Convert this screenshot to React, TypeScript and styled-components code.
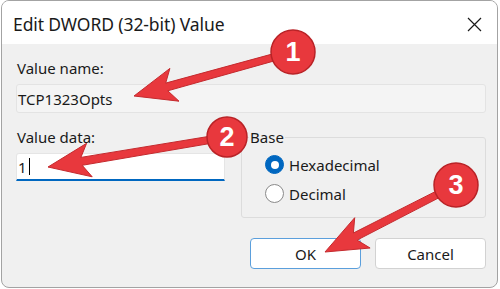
import React from 'react';
import styled, { createGlobalStyle } from 'styled-components';

const GlobalStyle = createGlobalStyle`
  html, body {
    margin: 0;
    padding: 0;
    background: #ffffff;
  }
  * {
    box-sizing: border-box;
  }
`

const Window = styled.div`
  position: relative;
  margin-left: 1px;
  width: 497px;
  height: 288px;
  border: 1px solid #a3a3a3;
  border-radius: 8px;
  background: #f0f0f0;
  overflow: hidden;
  font-family: "Noto Sans", "Open Sans", sans-serif;
  color: #1a1a1a;
`

const TitleBar = styled.div`
  height: 43px;
  background: #ffffff;
  display: flex;
  align-items: center;
  justify-content: space-between;
  padding: 0 14px 0 11px;
`

const Title = styled.span`
  font-size: 17.5px;
  letter-spacing: -0.1px;
  padding-top: 2px;
`

const Close = styled.span`
  width: 18px;
  height: 18px;
  margin-top: 3px;
  display: flex;
  align-items: center;
  justify-content: center;
`

const Body = styled.div`
  padding: 14px 11px 0 14px;
`

const Label = styled.div`
  font-size: 15px;
  line-height: 20px;
  padding-left: 1px;
`

const ReadField = styled.div`
  margin-top: 6px;
  height: 29px;
  background: #f4f4f4;
  border: 1px solid #e3e3e3;
  border-radius: 3px;
  font-size: 15px;
  display: flex;
  align-items: center;
  padding-left: 1px;
`

const Row = styled.div`
  margin-top: 9px;
  display: flex;
  align-items: flex-start;
`

const DataColumn = styled.div`
  width: 210px;
  padding-top: 5px;
`

const EditField = styled.div`
  margin-top: 6px;
  height: 28px;
  background: #ffffff;
  border: 1px solid #e5e5e5;
  border-bottom: 2px solid #0067c0;
  border-radius: 3px 3px 0 0;
  font-size: 15px;
  display: flex;
  align-items: center;
  padding-left: 1px;
`

const Caret = styled.span`
  display: inline-block;
  width: 1px;
  height: 17px;
  background: #000;
  margin-left: 2px;
`

const Group = styled.fieldset`
  margin: 6px 0 0 16px;
  width: 246px;
  height: 90px;
  border: 1px solid #dcdcdc;
  border-radius: 3px;
  padding: 4px 0 0 23px;
`

const Legend = styled.legend`
  font-size: 15px;
  line-height: 18px;
  padding: 0 1px;
  margin-left: -16px;
`

const RadioRow = styled.label`
  display: flex;
  align-items: center;
  gap: 5px;
  height: 29px;
  font-size: 15px;
`

const RadioDot = styled.span<{ $checked?: boolean }>`
  width: 19px;
  height: 19px;
  border-radius: 50%;
  background: ${p => (p.$checked ? '#0067c0' : '#ffffff')};
  border: 1px solid ${p => (p.$checked ? '#0067c0' : '#8a8a8a')};
  display: flex;
  align-items: center;
  justify-content: center;
  &::after {
    content: '';
    display: ${p => (p.$checked ? 'block' : 'none')};
    width: 8px;
    height: 8px;
    border-radius: 50%;
    background: #ffffff;
  }
`

const Buttons = styled.div`
  margin-top: 20px;
  display: flex;
  justify-content: flex-end;
  gap: 14px;
`

const Button = styled.button<{ $primary?: boolean }>`
  width: 111px;
  height: 31px;
  background: #ffffff;
  border: 1px solid ${p => (p.$primary ? '#5b9fdc' : '#d2d2d2')};
  border-radius: 4px;
  font-family: "Noto Sans", "Open Sans", sans-serif;
  font-size: 15px;
  color: #1a1a1a;
  padding: 0;
`

const Overlay = styled.svg`
  position: absolute;
  left: -1px;
  top: -1px;
  pointer-events: none;
`

type Callout = { n: string; cx: number; cy: number; r: number; tx: number; ty: number }

const callouts: Callout[] = [
  { n: '1', cx: 292, cy: 52, r: 22, tx: 133, ty: 96 },
  { n: '2', cx: 226, cy: 137, r: 20, tx: 47, ty: 167 },
  { n: '3', cx: 455, cy: 185, r: 22, tx: 324, ty: 252 },
]

function arrowPoints(c: Callout) {
  const dx = c.tx - c.cx
  const dy = c.ty - c.cy
  const len = Math.hypot(dx, dy)
  const ux = dx / len
  const uy = dy / len
  const px = -uy
  const py = ux
  const shaft = 3.5
  const headLen = 42
  const headW = 17
  const notch = 34
  const pt = (along: number, side: number) =>
    `${(c.cx + ux * along + px * side).toFixed(1)},${(c.cy + uy * along + py * side).toFixed(1)}`
  return [
    pt(0, shaft),
    pt(len - notch, shaft + 0.5),
    pt(len - headLen, headW),
    pt(len, 0),
    pt(len - headLen, -headW),
    pt(len - notch, -shaft - 0.5),
    pt(0, -shaft),
  ].join(' ')
}

export default function App() {
  return (
    <>
      <GlobalStyle />
      <Window>
        <TitleBar>
          <Title>Edit DWORD (32-bit) Value</Title>
          <Close>
            <svg width="15" height="15" viewBox="0 0 15 15">
              <path d="M1 1 L14 14 M14 1 L1 14" stroke="#1a1a1a" strokeWidth="1.2" />
            </svg>
          </Close>
        </TitleBar>
        <Body>
          <Label>Value name:</Label>
          <ReadField>TCP1323Opts</ReadField>
          <Row>
            <DataColumn>
              <Label>Value data:</Label>
              <EditField>
                1<Caret />
              </EditField>
            </DataColumn>
            <Group>
              <Legend>Base</Legend>
              <RadioRow>
                <RadioDot $checked />
                Hexadecimal
              </RadioRow>
              <RadioRow>
                <RadioDot />
                Decimal
              </RadioRow>
            </Group>
          </Row>
          <Buttons>
            <Button $primary>OK</Button>
            <Button>Cancel</Button>
          </Buttons>
        </Body>
        <Overlay width="500" height="289" viewBox="0 0 500 289">
          {callouts.map(c => (
            <g key={c.n}>
              <polygon points={arrowPoints(c)} fill="#e8383d" stroke="#c42a2e" strokeWidth="1" strokeLinejoin="round" />
              <circle cx={c.cx} cy={c.cy} r={c.r} fill="#e8383d" stroke="#b92327" strokeWidth="1.5" />
              <text
                x={c.cx}
                y={c.cy + 9}
                textAnchor="middle"
                fontFamily='"Liberation Sans", Arial, sans-serif'
                fontWeight="bold"
                fontSize="27"
                fill="#ffffff"
              >
                {c.n}
              </text>
            </g>
          ))}
        </Overlay>
      </Window>
    </>
  )
}
